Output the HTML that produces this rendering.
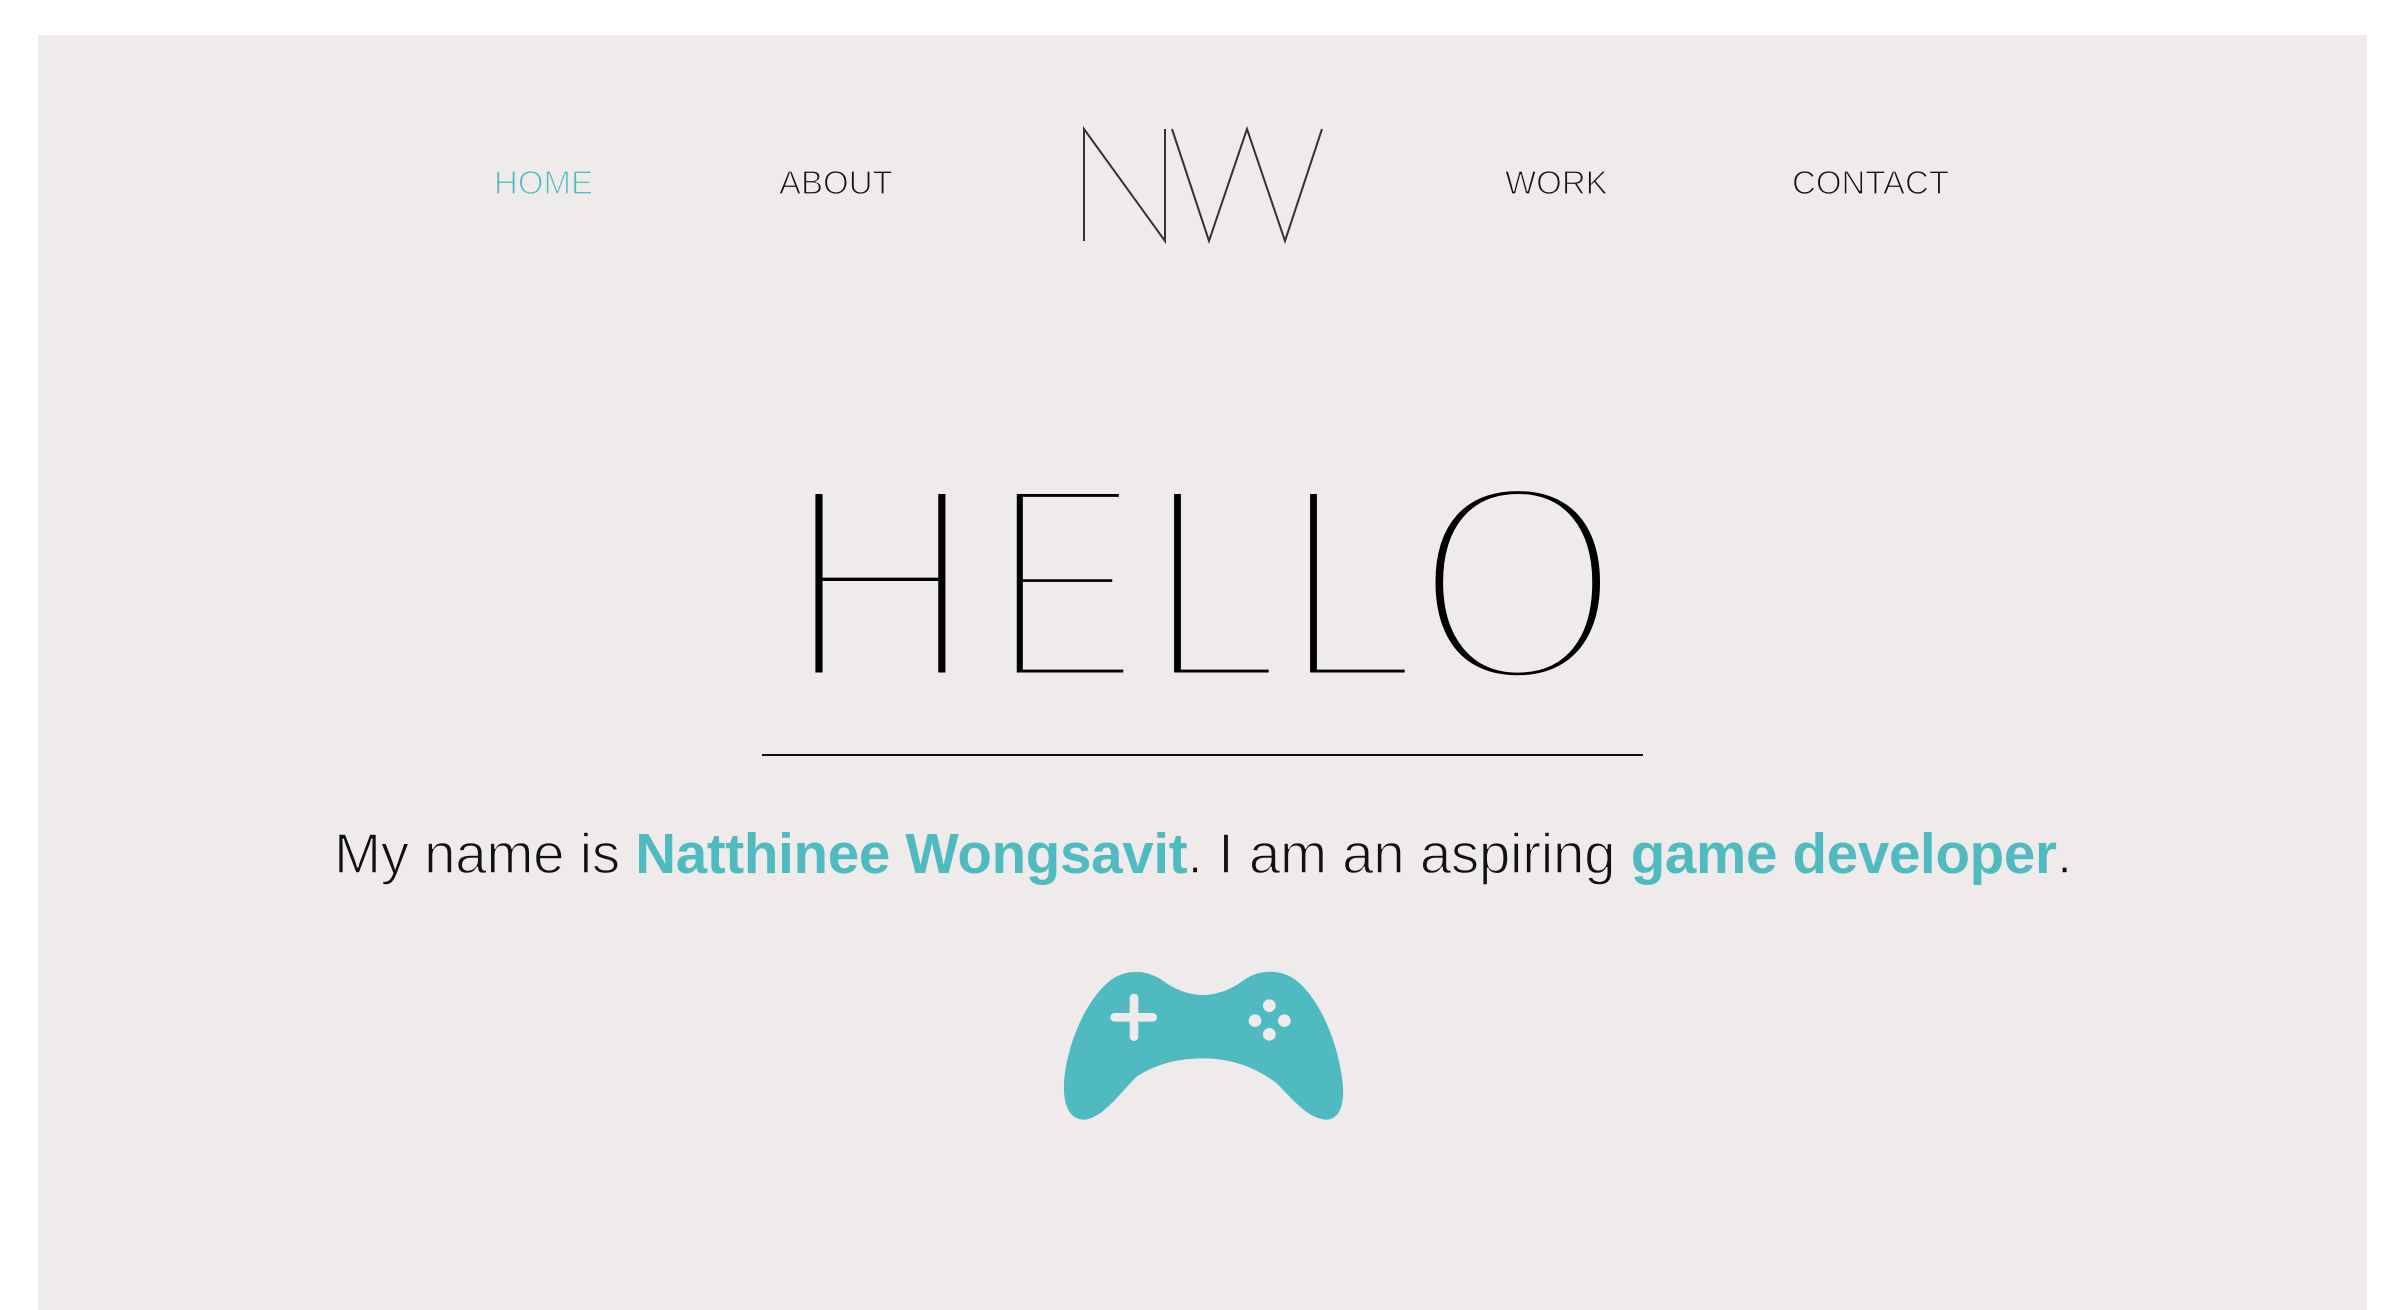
<!DOCTYPE html>
<html><head><meta charset="utf-8"><style>
html,body{margin:0;padding:0;background:#fff;width:2406px;height:1310px;overflow:hidden}
.panel{position:absolute;left:38px;top:35px;width:2329px;height:1275px;background:#efebeb}
.t{position:absolute;font-family:"Liberation Sans",sans-serif;white-space:nowrap;line-height:1}
.nav{font-size:33px;color:#111;top:166px;-webkit-text-stroke:1.2px #efebeb}
.hello{font-size:287px;color:#000;top:439px;-webkit-text-stroke:19px #efebeb;transform-origin:0 0}
.sent{font-size:56.5px;color:#111;top:826px;left:334px;letter-spacing:-0.3px}
.sent .l{-webkit-text-stroke:1.4px #efebeb}
.sent b{color:#4fbbc1;font-weight:bold}
</style></head><body>
<div class="panel"></div>
<div class="t nav" style="left:494px;color:#4fbbc1">HOME</div>
<div class="t nav" style="left:779px">ABOUT</div>
<div class="t nav" style="left:1505px">WORK</div>
<div class="t nav" style="left:1792px">CONTACT</div>
<svg style="position:absolute;left:1075px;top:120px" width="260" height="130" viewBox="1075 120 260 130">
<polyline points="1084,241 1084,129 1165,241 1165,129" fill="none" stroke="#3a3030" stroke-width="2"/>
<polyline points="1172,129 1209,241 1247,129 1285,241 1322,129" fill="none" stroke="#3a3030" stroke-width="2"/>
</svg>
<div class="t hello" style="left:785px;transform:scaleX(0.92)">H</div>
<div class="t hello" style="left:991px;transform:scaleX(0.78)">E</div>
<div class="t hello" style="left:1145px;transform:scaleX(0.88)">L</div>
<div class="t hello" style="left:1281px;transform:scaleX(0.88)">L</div>
<div class="t hello" style="left:1414px;transform:scaleX(0.93)">O</div>
<div style="position:absolute;left:762px;top:754px;width:881px;height:2px;background:#111"></div>
<div class="t sent"><span class="l">My name is </span><b>Natthinee Wongsavit</b><span class="l">. I am an aspiring </span><b>game developer</b><span class="l">.</span></div>
<svg style="position:absolute;left:1040px;top:940px" width="330" height="200" viewBox="0 0 990 600">
<path fill="#4fbbc1" d="M380,130 C330,90 270,85 220,115 C150,160 80,300 72,430 C68,510 100,545 140,538 C190,530 240,460 290,410 C350,370 420,355 490,355 C560,355 640,375 710,430 C760,480 800,530 850,538 C895,545 915,500 908,430 C895,300 830,160 760,115 C710,85 650,90 605,125 C570,150 530,165 490,165 C450,165 410,150 380,130 Z"/>
<line x1="224" y1="232" x2="338" y2="232" stroke="#efebeb" stroke-width="26" stroke-linecap="round"/>
<line x1="282" y1="174" x2="282" y2="290" stroke="#efebeb" stroke-width="26" stroke-linecap="round"/>
<circle cx="688" cy="197" r="19" fill="#efebeb"/><circle cx="645" cy="242" r="19" fill="#efebeb"/>
<circle cx="733" cy="242" r="19" fill="#efebeb"/><circle cx="688" cy="283" r="19" fill="#efebeb"/>
</svg>
</body></html>
